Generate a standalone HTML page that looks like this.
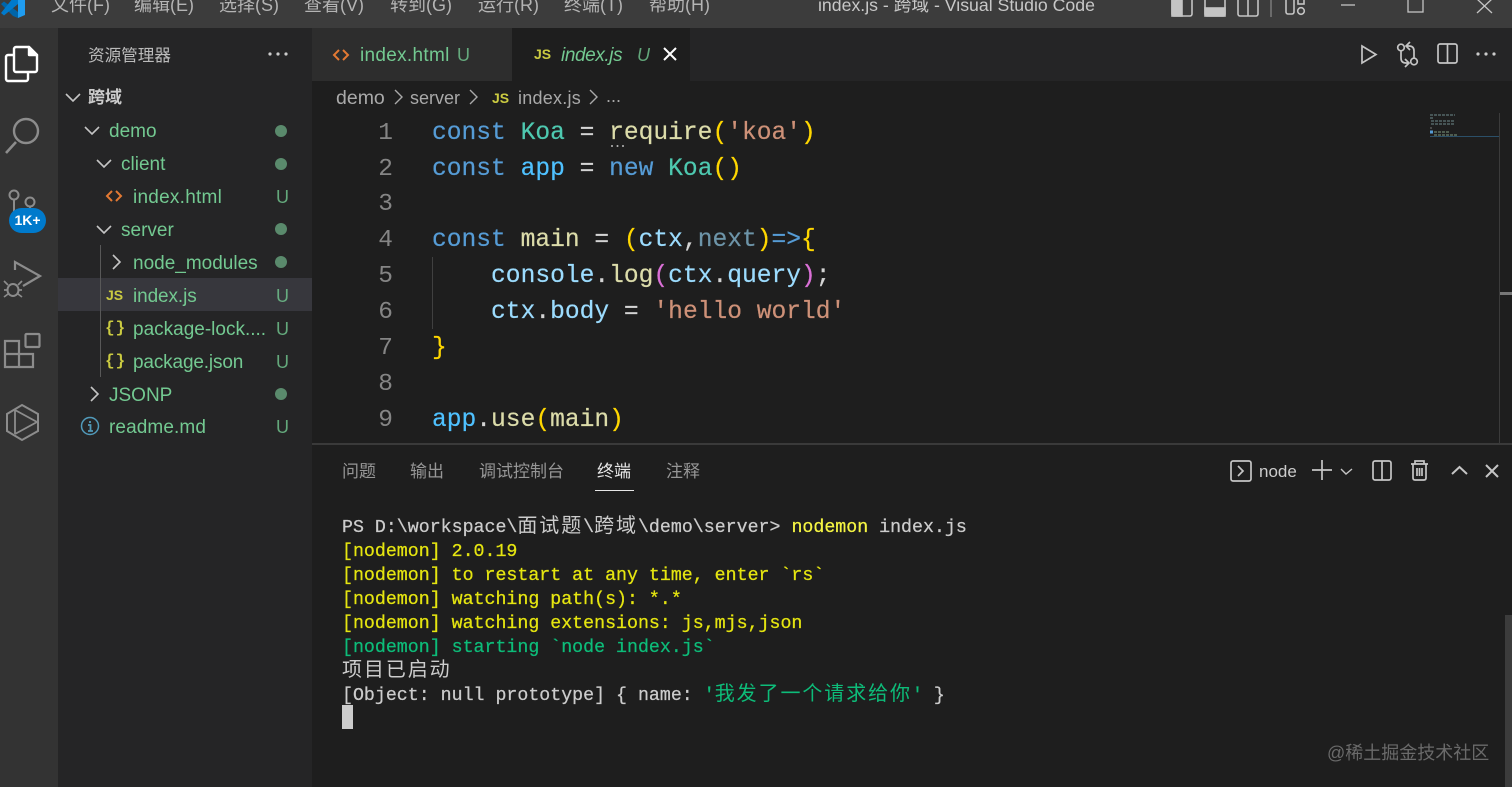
<!DOCTYPE html>
<html><head><meta charset="utf-8"><style>
html,body{margin:0;padding:0;width:1512px;height:787px;overflow:hidden;background:#1e1e1e}
body{position:relative;font-family:"Liberation Sans","Noto Sans CJK SC",sans-serif;}
.a{position:absolute;white-space:pre}
.r{position:absolute}
svg{position:absolute;overflow:visible}
.m{top:-7px;font-size:18px;color:#b4b4b4;line-height:24px}
.t{font-size:19px;color:#73c991;line-height:24px}
.u{font-size:18px;color:#73c991;left:276px;line-height:24px;opacity:.8}
.d{position:absolute;left:275px;width:12px;height:12px;border-radius:50%;background:#5a8a6c}
.c{position:absolute;left:432px;font-family:"Liberation Mono","DejaVu Sans Mono",monospace;font-size:24.6px;line-height:36px;white-space:pre;color:#d4d4d4;-webkit-text-stroke:.2px}
.n{position:absolute;width:60px;left:333px;text-align:right;font-family:"Liberation Mono",monospace;font-size:24.5px;line-height:36px;color:#858585}
.k{color:#569cd6}.g{color:#4ec9b0}.f{color:#dcdcaa}.s{color:#ce9178}.v{color:#9cdcfe}.i{color:#4fc1ff}.y{color:#ffd700}.p{color:#da70d6}
.l{position:absolute;left:342px;font-family:"Liberation Mono","Noto Sans CJK SC",monospace;font-size:18.27px;line-height:24px;white-space:pre;color:#ccc;-webkit-text-stroke:.25px}
.w{color:#e5e510}.h{color:#0dbc79}
.cj{font-size:20px;letter-spacing:1.92px;-webkit-text-stroke:0;line-height:20px}
.tab{top:460px;font-size:17px;line-height:24px;color:#969696}
.js{font-family:"Liberation Sans",sans-serif;font-weight:700;font-size:14px;color:#cbcb41;line-height:20px}
.br{font-family:"Liberation Mono",monospace;font-weight:700;font-size:16px;color:#cbcb41;line-height:22px;letter-spacing:1px}
</style></head><body>
<!-- title bar -->
<div class="r" style="left:0;top:0;width:1512px;height:28px;background:#3c3c3c"></div>
<svg style="left:0;top:0" width="26" height="18">
<path d="M1 4L4 1.500L18 12V18L13 16Z" fill="#0065a9"/>
<path d="M1 13L4 15.500L18 4V-4L13 -2Z" fill="#007acc"/>
<path d="M18 -4L25 0V15L18 18Z" fill="#1f9cf0"/>
</svg>
<div class="a m" style="left:51px">文件(F)</div><div class="a m" style="left:134px">编辑(E)</div><div class="a m" style="left:219px">选择(S)</div><div class="a m" style="left:304px">查看(V)</div><div class="a m" style="left:390px">转到(G)</div><div class="a m" style="left:478px">运行(R)</div><div class="a m" style="left:564px">终端(T)</div><div class="a m" style="left:649px">帮助(H)</div>
<div class="a m" style="left:818px;font-size:17.7px;color:#c8c8c8">index.js - 跨域 - Visual Studio Code</div>
<svg style="left:0;top:0" width="1512" height="28" fill="none" stroke="#c4c4c4" stroke-width="1.6">
<rect x="1172" y="-6" width="20" height="22" rx="2"/><rect x="1172" y="-6" width="10" height="22" fill="#c4c4c4"/>
<rect x="1205" y="-6" width="20" height="22" rx="2"/><rect x="1205" y="8" width="20" height="8" fill="#c4c4c4"/>
<rect x="1238" y="-6" width="20" height="22" rx="2"/><path d="M1248 -6V16"/>
<path d="M1271 0V17" stroke="#777"/>
<rect x="1286" y="-6" width="8" height="20" rx="2"/><circle cx="1301" cy="11" r="3.300"/><rect x="1298" y="-2" width="6" height="6"/>
<path d="M1341 5H1355" stroke-width="1.300"/><rect x="1408" y="-5" width="15" height="17" stroke-width="1.300"/><path d="M1477 -1L1492 13M1492 -1L1477 13" stroke-width="1.300"/>
</svg>
<!-- activity bar -->
<div class="r" style="left:0;top:28px;width:58px;height:759px;background:#333"></div>
<svg style="left:0;top:0" width="58" height="460" fill="none" stroke="#8c8c8c" stroke-width="2">
<g stroke="#fff" stroke-width="2.400" stroke-linejoin="round"><path d="M14 55H8A2 2 0 0 0 6 57V79A2 2 0 0 0 8 81H26A2 2 0 0 0 28 79V72"/><path d="M16 47H29L37 55V70A2 2 0 0 1 35 72H16A2 2 0 0 1 14 70V49A2 2 0 0 1 16 47Z"/><path d="M29 47V55H37L29 47Z" fill="#fff"/></g>
<circle cx="26" cy="131" r="12" stroke-width="2.400"/><path d="M16 142L6 153" stroke-width="2.600"/>
<circle cx="14" cy="195" r="4.500"/><circle cx="30" cy="202" r="4.500"/><path d="M14 200V214M30 207V212"/>
<path d="M15 270V262L40 276L23 286" stroke-width="2.200"/><ellipse cx="13" cy="290" rx="5.500" ry="6"/><path d="M4 281L8 285M22 281L18 285M4 290H8M22 290H18M4 297L8 294M22 297L18 294" stroke-width="1.700"/>
<path d="M5 341H19V354H33V367H5ZM5 354H19V367" stroke-width="2.200"/><rect x="25.500" y="334" width="14" height="13" rx="1" stroke-width="2.200"/>
<path d="M22 405L38 414V431L22 440L7 431V414Z"/><path d="M15 410V434M15 410L37 422L15 434" stroke-width="1.800"/>
</svg>
<div class="r" style="left:9px;top:208px;width:37px;height:25px;border-radius:13px;background:#007acc;color:#fff;font-size:14px;font-weight:700;text-align:center;line-height:25px">1K+</div>
<!-- sidebar -->
<div class="r" style="left:58px;top:28px;width:254px;height:759px;background:#252526"></div>
<div class="a" style="left:88px;top:45px;font-size:16.600px;line-height:22px;color:#bbb">资源管理器</div>
<svg style="left:268px;top:50px" width="20" height="8" fill="#ccc"><circle cx="2" cy="4" r="1.600"/><circle cx="10" cy="4" r="1.600"/><circle cx="18" cy="4" r="1.600"/></svg>
<div class="r" style="left:58px;top:278px;width:254px;height:33px;background:#37373d"></div>
<div class="r" style="left:100px;top:245px;width:1px;height:132px;background:#585858"></div>
<svg style="left:58px;top:80px" width="100" height="320" fill="none" stroke="#c5c5c5" stroke-width="1.600">
<path d="M8 14L15 21L22 14M27 47L34 54L41 47M39 80L46 87L53 80M39 146L46 153L53 146M55 175L62 182L55 189M33 307L40 314L33 321"/>
</svg>
<div class="a" style="left:88px;top:86px;font-size:17px;font-weight:700;line-height:24px;color:#ccc">跨域</div>
<div class="a t" style="left:109px;top:120px">demo</div>
<div class="a t" style="left:121px;top:153px">client</div>
<div class="a t" style="left:133px;top:186px;letter-spacing:.25px">index.html</div>
<div class="a t" style="left:121px;top:219px">server</div>
<div class="a t" style="left:133px;top:252px">node_modules</div>
<div class="a t" style="left:133px;top:285px;letter-spacing:-.1px">index.js</div>
<div class="a t" style="left:133px;top:318px">package-lock....</div>
<div class="a t" style="left:133px;top:351px;letter-spacing:-.15px">package.json</div>
<div class="a t" style="left:109px;top:384px">JSONP</div>
<div class="a t" style="left:109px;top:416px;letter-spacing:.1px">readme.md</div>
<div class="d" style="top:125px"></div><div class="d" style="top:158px"></div><div class="d" style="top:223px"></div><div class="d" style="top:256px"></div><div class="d" style="top:388px"></div>
<div class="a u" style="top:185px">U</div><div class="a u" style="top:284px">U</div><div class="a u" style="top:317px">U</div><div class="a u" style="top:350px">U</div><div class="a u" style="top:415px">U</div>
<svg style="left:106px;top:188px" width="16" height="16" fill="none" stroke="#e37933" stroke-width="2"><path d="M6 3L1 8L6 13M10 3L15 8L10 13"/></svg>
<div class="a js" style="left:106px;top:285px">JS</div>
<div class="a br" style="left:105px;top:317px">{}</div>
<div class="a br" style="left:105px;top:350px">{}</div>
<svg style="left:81px;top:417px" width="18" height="18" fill="none" stroke="#519aba" stroke-width="1.500"><circle cx="9" cy="9" r="8.500"/><path d="M7 8H9.500V14M7 14H12M9 4V6" stroke-width="1.800"/></svg>
<!-- tabs -->
<div class="r" style="left:312px;top:28px;width:1200px;height:53px;background:#252526"></div>
<div class="r" style="left:312px;top:28px;width:200px;height:53px;background:#2d2d2d"></div>
<div class="r" style="left:512px;top:28px;width:178px;height:53px;background:#1e1e1e"></div>
<svg style="left:333px;top:47px" width="16" height="16" fill="none" stroke="#e37933" stroke-width="2"><path d="M6 3L1 8L6 13M10 3L15 8L10 13"/></svg>
<div class="a t" style="left:360px;top:44px;letter-spacing:.3px">index.html</div>
<div class="a u" style="left:457px;top:43px">U</div>
<div class="a js" style="left:534px;top:44px">JS</div>
<div class="a t" style="left:561px;top:44px;font-style:italic;letter-spacing:-.4px">index.js</div>
<div class="a u" style="left:637px;top:43px;font-style:italic">U</div>
<svg style="left:663px;top:47px" width="14" height="14" stroke="#fff" stroke-width="2"><path d="M1 1L13 13M13 1L1 13"/></svg>
<svg style="left:0;top:0" width="1512" height="81" fill="none" stroke="#c5c5c5" stroke-width="1.700">
<path d="M1362 46L1376 54.500L1362 63Z"/>
<circle cx="1401" cy="47.500" r="3.300"/><circle cx="1414" cy="61.500" r="3.300"/>
<path d="M1414 58V51Q1414 46 1409 46H1406M1410 42L1406 46L1410 50M1401 51V58Q1401 63 1406 63H1409M1405 59L1409 63L1405 67"/>
<rect x="1438" y="44" width="19" height="19" rx="2"/><path d="M1447.500 44V63"/>
<g fill="#ccc" stroke="none"><circle cx="1478" cy="54" r="1.600"/><circle cx="1486" cy="54" r="1.600"/><circle cx="1494" cy="54" r="1.600"/></g></svg>
<!-- breadcrumb -->
<div class="a" style="left:336px;top:86px;font-size:19.500px;line-height:24px;color:#a9a9a9">demo</div>
<div class="a" style="left:410px;top:86px;font-size:18px;line-height:24px;color:#a9a9a9">server</div>
<div class="a js" style="left:492px;top:88px">JS</div>
<div class="a" style="left:518px;top:86px;font-size:18px;line-height:24px;color:#a9a9a9;letter-spacing:.25px">index.js</div>
<div class="a" style="left:606px;top:84px;font-size:18px;line-height:24px;color:#a9a9a9">...</div>
<svg style="left:0;top:0" width="700" height="110" fill="none" stroke="#a9a9a9" stroke-width="1.400"><path d="M395 90L402 97L395 104M470 90L477 97L470 104M590 90L597 97L590 104"/></svg>
<!-- code -->
<div class="n" style="top:116px">1</div><div class="n" style="top:152px">2</div><div class="n" style="top:187px">3</div><div class="n" style="top:223px">4</div><div class="n" style="top:259px">5</div><div class="n" style="top:295px">6</div><div class="n" style="top:331px">7</div><div class="n" style="top:367px">8</div><div class="n" style="top:403px">9</div>
<div class="c" style="top:116px"><span class="k">const</span> <span class="g">Koa</span> = <span class="f">require</span><span class="y">(</span><span class="s">'koa'</span><span class="y">)</span></div>
<div class="c" style="top:152px"><span class="k">const</span> <span class="i">app</span> = <span class="k">new</span> <span class="g">Koa</span><span class="y">()</span></div>
<div class="c" style="top:223px"><span class="k">const</span> <span class="f">main</span> = <span class="y">(</span><span class="v">ctx</span>,<span style="color:#6d94a8">next</span><span class="y">)</span><span class="k">=&gt;</span><span class="y">{</span></div>
<div class="c" style="top:259px">    <span class="v">console</span>.<span class="f">log</span><span class="p">(</span><span class="v">ctx</span>.<span class="v">query</span><span class="p">)</span>;</div>
<div class="c" style="top:295px">    <span class="v">ctx</span>.<span class="v">body</span> = <span class="s">'hello world'</span></div>
<div class="c y" style="top:331px;color:#ffd700">}</div>
<div class="c" style="top:403px"><span class="i">app</span>.<span class="f">use</span><span class="y">(</span><span class="f">main</span><span class="y">)</span></div>
<div class="r" style="left:432px;top:257px;width:1px;height:72px;background:#404040"></div>
<svg style="left:610px;top:144px" width="16" height="4" fill="#bbb"><circle cx="2" cy="2" r="1"/><circle cx="7.500" cy="2" r="1"/><circle cx="13" cy="2" r="1"/></svg>
<!-- minimap -->
<svg style="left:1429px;top:113px" width="83" height="24" stroke-width="1"><path d="M1 2H26M1 5H4M2 8H26M2 11H26" stroke="#6f8a8c" stroke-dasharray="3 1"/><path d="M1 15H3" stroke="#777"/><path d="M1 19H4" stroke="#569cd6" stroke-width="3"/><path d="M5 19H20M5 22H28" stroke="#7f9a80" stroke-dasharray="3 1"/><path d="M1 23.500H70" stroke="#2b4f68"/></svg>
<div class="r" style="left:1499px;top:113px;width:1px;height:330px;background:#3b3b3b"></div>
<div class="r" style="left:1500px;top:292px;width:12px;height:3px;background:#777"></div>
<!-- panel -->
<div class="r" style="left:312px;top:443px;width:1200px;height:2px;background:#3a3a3a"></div>
<div class="a tab" style="left:342px">问题</div><div class="a tab" style="left:410px">输出</div><div class="a tab" style="left:479px">调试控制台</div><div class="a tab" style="left:597px;color:#e7e7e7">终端</div><div class="a tab" style="left:666px">注释</div>
<div class="r" style="left:595px;top:490px;width:39px;height:1px;background:#e7e7e7"></div>
<svg style="left:1230px;top:440px" width="282" height="60" fill="none" stroke="#c5c5c5" stroke-width="1.700">
<rect x="1" y="21" width="20" height="20" rx="2"/><path d="M8 26L13 31L8 36"/>
<path d="M82 30H102M92 20V40"/><path d="M111 29L116 34L122 29" stroke-width="1.400"/>
<rect x="143" y="21" width="18" height="19" rx="2"/><path d="M152 21V40"/>
<path d="M181 24H198M185 24V21H194V24M183 24V38Q183 40 185 40H194Q196 40 196 38V24M187 28V36M192 28V36M189.500 28V36"/>
<path d="M222 34L229.500 27L237 34M256 25L268 37M268 25L256 37" stroke-width="2"/></svg>
<div class="a" style="left:1259px;top:460px;font-size:17px;line-height:24px;color:#ccc">node</div>
<!-- terminal -->
<div class="l" style="top:516px">PS D:\workspace\<span class="cj">面试题</span>\<span class="cj">跨域</span>\demo\server&gt; <span style="color:#f5f543">nodemon</span> index.js</div>
<div class="l w" style="top:540px">[nodemon] 2.0.19</div>
<div class="l w" style="top:564px">[nodemon] to restart at any time, enter `rs`</div>
<div class="l w" style="top:588px">[nodemon] watching path(s): *.*</div>
<div class="l w" style="top:612px">[nodemon] watching extensions: js,mjs,json</div>
<div class="l h" style="top:636px">[nodemon] starting `node index.js`</div>
<div class="l" style="top:660px"><span class="cj">项目已启动</span></div>
<div class="l" style="top:684px">[Object: null prototype] { name: <span class="h">'<span class="cj">我发了一个请求给你</span>'</span> }</div>
<div class="r" style="left:342px;top:705px;width:11px;height:24px;background:#ccc"></div>
<div class="r" style="left:1505px;top:615px;width:7px;height:172px;background:#3c3c3c"></div>
<div class="a" style="left:1327px;top:741px;font-size:18px;line-height:24px;color:#6a6a6a">@稀土掘金技术社区</div>
</body></html>
